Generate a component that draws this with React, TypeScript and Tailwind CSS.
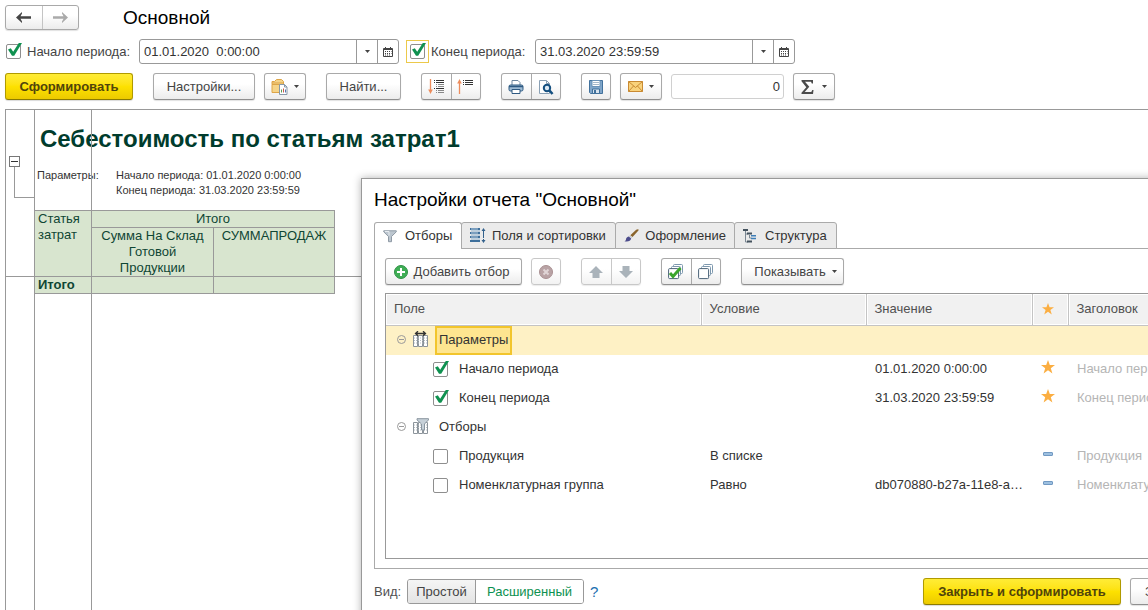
import React, { useState } from "react";

const btn =
  "flex h-[27px] items-center justify-center rounded-[3px] border border-[#a9a9a9] border-b-[#8f8f8f] bg-linear-to-b from-white from-40% to-[#ececec] text-[#444] shadow-[0_1px_1px_rgba(0,0,0,0.12)]";
const btnOff =
  "flex h-[27px] items-center justify-center rounded-[3px] border border-[#c8c8c8] bg-linear-to-b from-white from-40% to-[#f2f2f2] shadow-[0_1px_1px_rgba(0,0,0,0.08)]";
const yellow =
  "flex h-[27px] items-center justify-center rounded-[3px] border border-[#b09a00] border-b-[#8c7b00] bg-linear-to-b from-[#ffec35] via-[#fde100] to-[#ecca00] font-bold text-[#50440c] shadow-[0_1px_1px_rgba(0,0,0,0.15)]";
const pair =
  "flex h-[27px] w-[60px] divide-x divide-[#a9a9a9] rounded-[3px] border border-[#a9a9a9] border-b-[#8f8f8f] bg-linear-to-b from-white from-40% to-[#ececec] shadow-[0_1px_1px_rgba(0,0,0,0.12)]";
const pairOff =
  "flex h-[27px] w-[60px] divide-x divide-[#c8c8c8] rounded-[3px] border border-[#c8c8c8] bg-linear-to-b from-white from-40% to-[#f2f2f2] shadow-[0_1px_1px_rgba(0,0,0,0.08)]";
const half = "flex flex-1 items-center justify-center";

function Caret() {
  return (
    <svg width="5" height="3" viewBox="0 0 5 3" aria-hidden="true">
      <path d="M0 0h5L2.500 3z" fill="#444" />
    </svg>
  );
}

function Check({ id, label, initial = false }: { id: string; label?: string; initial?: boolean }) {
  const [on, setOn] = useState(initial);
  return (
    <span className="relative block size-[15px] shrink-0">
      <input
        id={id}
        type="checkbox"
        aria-label={label}
        checked={on}
        onChange={(e) => setOn(e.target.checked)}
        className="block size-[15px] appearance-none rounded-[2px] border border-[#8e8e8e] bg-white"
      />
      {on && (
        <svg className="pointer-events-none absolute -top-px left-0" width="18" height="15" viewBox="0 0 18 15" aria-hidden="true">
          <path d="M2 6.500 4.800 5.300 7.200 8.700 12.800 0 16 0 8.200 12.800 6 12.800z" fill="#0f9150" />
        </svg>
      )}
    </span>
  );
}

function CalendarIcon() {
  return (
    <svg width="10" height="10" viewBox="0 0 10 10" fill="none" stroke="#444" aria-hidden="true">
      <path d="M.5 1.500h9v8h-9z" />
      <path d="M1 2.500h8M2.500 0v2M7.500 0v2" />
      <path d="M2 4.500h1m1 0h1m1 0h1m1 0h.5M2 6.500h1m1 0h1m1 0h1m1 0h.5M2 8h1m1 0h1m1 0h1" />
    </svg>
  );
}

function DateField({ id, value }: { id: string; value: string }) {
  return (
    <div className="flex h-[25px] w-[260px] divide-x divide-[#999] overflow-hidden rounded-[3px] border border-[#999] bg-white">
      <input id={id} defaultValue={value} aria-label="Дата" className="min-w-0 flex-1 px-1 whitespace-pre text-[#333] outline-none" />
      <button aria-label="Выбрать из списка" className="flex w-[21px] items-center justify-center">
        <Caret />
      </button>
      <button aria-label="Календарь" className="flex w-5 items-center justify-center">
        <CalendarIcon />
      </button>
    </div>
  );
}

function NavArrow({ color, flip = false }: { color: string; flip?: boolean }) {
  return (
    <svg width="15" height="11" viewBox="0 0 15 11" className={flip ? "rotate-180" : ""} aria-hidden="true">
      <path d="M0 5.500 6 0v1.500L4.500 4.300H15v2.400H4.500L6 9.500V11z" fill={color} />
    </svg>
  );
}

function FolderReportIcon() {
  return (
    <svg width="17" height="17" viewBox="0 0 17 17" aria-hidden="true">
      <path d="M1 3.500h2.500l2-2h5l2 2v3H1z" fill="#f5d489" stroke="#dda548" />
      <path d="M1 6.500h11v8H1z" fill="#f5d489" stroke="#dda548" />
      <path d="M1 5h11" stroke="#dda548" />
      <path d="M8.500 6.500h5l2.500 2.500v7.500H8.500z" fill="#fff" stroke="#8798a8" />
      <path d="M13.500 6.500v2.500H16" fill="none" stroke="#8798a8" />
      <path d="M10.500 14.500v-3" stroke="#5a9a50" />
      <path d="M12.500 14.500v-4" stroke="#c85a4a" />
      <path d="M14.500 14.500v-3" stroke="#5878b0" />
    </svg>
  );
}

function ExpandIcon() {
  return (
    <svg width="17" height="16" viewBox="0 0 17 16" fill="none" aria-hidden="true">
      <path d="M2.500 0v12" stroke="#ec8c5c" strokeWidth="1.300" />
      <path d="M.2 10.500h4.600L2.500 15z" fill="#ec8c5c" />
      <path d="M6 1.500h1m1 0h8M6 3.500h1m1 0h8" stroke="#333" />
      <path d="M8 5.500h1m1 0h6M8 7.500h1m1 0h6" stroke="#888" />
      <path d="M6 9.500h1m1 0h8" stroke="#333" />
      <path d="M8 11.500h1m1 0h6M8 13.500h1m1 0h6" stroke="#888" />
    </svg>
  );
}

function CollapseIcon() {
  return (
    <svg width="17" height="16" viewBox="0 0 17 16" fill="none" aria-hidden="true">
      <path d="M2.500 3v12" stroke="#ec8c5c" strokeWidth="1.300" />
      <path d="M.2 4.500h4.600L2.500 0z" fill="#ec8c5c" />
      <path d="M6 1.500h1m1 0h8M6 3.500h1m1 0h8M6 5.500h1m1 0h8" stroke="#333" />
    </svg>
  );
}

function PrinterIcon() {
  return (
    <svg width="16" height="16" viewBox="0 0 16 16" aria-hidden="true">
      <path d="M4 6V1.500h6l2 2V6" fill="#fff" stroke="#6d869e" />
      <rect x="1" y="6" width="14" height="6" rx="1.500" fill="#9dbad3" stroke="#2f5a82" />
      <path d="M1 7.500h14" stroke="#2f5a82" strokeWidth="1.500" />
      <path d="M4 10.500h8v4H4z" fill="#fff" stroke="#2f5a82" />
    </svg>
  );
}

function PreviewIcon() {
  return (
    <svg width="16" height="16" viewBox="0 0 16 16" fill="none" aria-hidden="true">
      <path d="M1.500 1.500h7l3 3v10h-10z" fill="#fff" stroke="#8aa0b4" />
      <path d="M8.500 1.500v3h3" stroke="#8aa0b4" />
      <circle cx="9" cy="9" r="3.200" fill="#dceaf5" stroke="#155080" strokeWidth="2" />
      <path d="m11.500 11.500 3 3.500" stroke="#155080" strokeWidth="2.600" />
    </svg>
  );
}

function SaveIcon() {
  return (
    <svg width="16" height="16" viewBox="0 0 16 16" aria-hidden="true">
      <path d="M1.500 1.500h13v13h-12l-1-1z" fill="#7fa5c9" stroke="#41719c" />
      <path d="M4 1.500h8v6H4z" fill="#fff" stroke="#6b93b8" />
      <path d="M5 3.500h6M5 5.500h6" stroke="#a5b8ca" />
      <path d="M4.500 10h7v4.500h-7z" fill="#d7e3ee" stroke="#41719c" />
      <path d="M6 11h2v3H6z" fill="#41719c" />
    </svg>
  );
}

function MailIcon() {
  return (
    <svg width="15" height="11" viewBox="0 0 15 11" aria-hidden="true">
      <path d="M.5.5h14v10H.5z" fill="#f9d27b" stroke="#c98a32" />
      <path d="m.5.500 7 6 7-6M.5 10.500l5-5.500M14.500 10.500l-5-5.500" fill="none" stroke="#c98a32" />
    </svg>
  );
}

function SigmaIcon() {
  return (
    <svg width="13" height="14" viewBox="0 0 13 14" aria-hidden="true">
      <path d="M.5 0h11.500v3.500h-1.200L10 1.800H4l4.300 5L3.700 12H10.300l1-2h1.200L12 14H.5v-1.300L5.300 7.200.5 1.300z" fill="#4a4a4a" />
    </svg>
  );
}

function FunnelIcon() {
  return (
    <svg width="14" height="13" viewBox="0 0 14 13" aria-hidden="true">
      <path d="M.7.8h12.600v1L8.500 6.500v5.200H5.500V6.500L.7 1.800z" fill="#bcc6cf" stroke="#8f9aa5" />
      <path d="M2 1.500h4v4" fill="none" stroke="#e8edf1" />
    </svg>
  );
}

function FieldsIcon() {
  return (
    <svg width="16" height="15" viewBox="0 0 16 15" fill="none" aria-hidden="true">
      <path d="M0 1h10M0 5h10M0 9h10M0 13h10" stroke="#3e6f9b" strokeWidth="2" />
      <path d="M1 3h9M1 7h9M1 11h9" stroke="#8fb0cc" />
      <path d="M1 5h7M1 9h7M1 1h7" stroke="#b8cfe2" />
      <path d="M13.500 2v11" stroke="#33618c" strokeDasharray="8 1" />
      <path d="m11.500 3 2-3 2 3zM11.500 12l2 3 2-3z" fill="#33618c" />
    </svg>
  );
}

function BrushIcon() {
  return (
    <svg width="17" height="15" viewBox="0 0 17 15" aria-hidden="true">
      <path d="M15.500.5c1 0 1 1 .3 1.800L9.500 9.300 7 7.200 13.500 1z" fill="#8a642c" />
      <path d="m6.500 7.300 2.800 2.300-1 1L5.700 8.300z" fill="#c3c7cc" />
      <path d="M5.300 8.500 8 10.800c-.5 3-4 4-7.500 3 2-.8 1.500-1.800 2-3.300.4-1 1.500-1.800 2.800-2z" fill="#4c4c8c" />
    </svg>
  );
}

function StructureIcon() {
  return (
    <svg width="14" height="14" viewBox="0 0 14 14" fill="none" aria-hidden="true">
      <path d="M0 1h5" stroke="#44525e" strokeWidth="2" />
      <path d="M2.500 2v11H5M2.500 5H5M6.500 6v3h2" stroke="#7a8792" />
      <path d="M4 4.500h5" stroke="#44525e" strokeWidth="2" />
      <path d="M8 6.800h5M8 9.500h5" stroke="#3f7fb8" strokeWidth="1.600" />
      <path d="M4 12.500h5" stroke="#44525e" strokeWidth="2" />
    </svg>
  );
}

function PlusIcon() {
  return (
    <svg width="14" height="14" viewBox="0 0 14 14" aria-hidden="true">
      <circle cx="7" cy="7" r="6.500" fill="#3fae55" stroke="#2f9246" />
      <path d="M7 3v8M3 7h8" stroke="#fff" strokeWidth="2" />
    </svg>
  );
}

function DeleteIcon() {
  return (
    <svg width="14" height="14" viewBox="0 0 14 14" aria-hidden="true">
      <circle cx="7" cy="7" r="6.500" fill="#b9a3a5" stroke="#a99092" />
      <path d="m4.500 4.500 5 5m0-5-5 5" stroke="#e0d5d6" strokeWidth="2" />
    </svg>
  );
}

function MoveIcon({ down = false }: { down?: boolean }) {
  return (
    <svg width="14" height="12" viewBox="0 0 14 12" className={down ? "rotate-180" : ""} aria-hidden="true">
      <path d="m7 0 7 7h-3.500v5h-7V7H0z" fill="#aab3ba" />
    </svg>
  );
}

function StackIcon({ checked = false }: { checked?: boolean }) {
  return (
    <svg width="16" height="16" viewBox="0 0 16 16" aria-hidden="true">
      <g fill="#fff" stroke="#7d98ae">
        <rect x="5.500" y=".5" width="9" height="9" rx="1" />
        <rect x="3.500" y="2.500" width="9" height="9" rx="1" />
      </g>
      <rect x=".6" y="4.600" width="10" height="10" rx="1" fill="#fff" stroke="#4a6378" />
      {checked && <path d="m2 9 3 3.500 7.500-8.500" fill="none" stroke="#3ba52c" strokeWidth="3" />}
    </svg>
  );
}

function StarIcon({ size }: { size: number }) {
  return (
    <svg width={size} height={size} viewBox="0 0 14 14" className="mx-auto" aria-hidden="true">
      <path d="m7 0 1.800 5H14l-4.200 3.200L11.400 13.500 7 10.300 2.600 13.500 4.200 8.200 0 5h5.200z" fill="#fbae42" />
    </svg>
  );
}

function DashIcon() {
  return (
    <svg width="10" height="4" viewBox="0 0 10 4" className="mx-auto" aria-hidden="true">
      <rect x=".5" y=".5" width="9" height="3" rx=".5" fill="#9dc0e0" stroke="#7199c2" />
    </svg>
  );
}

function GroupIcon({ filter = false }: { filter?: boolean }) {
  return (
    <svg width="16" height="16" viewBox="0 0 16 16" fill="none" aria-hidden="true">
      <path d="M.5 4.500h4v11h-4zM5.500 4.500h4v11h-4zM10.500 4.500h4v11h-4z" fill="#fff" stroke="#8c949b" />
      <path d="M1 7h13M1 9.500h13M1 12h13" stroke="#b5bcc2" strokeDasharray="1 1" />
      {filter ? (
        <path d="M4 .7h11.500v1.200L11.500 6v6h-3V6L4 1.900z" fill="#c6d0d8" stroke="#89959f" />
      ) : (
        <path d="M3 2.500h9M5 .2 2.500 2.500 5 4.800M10 .2l2.500 2.300L10 4.800" stroke="#333" strokeWidth="1.300" />
      )}
    </svg>
  );
}

function CollapseMark() {
  return (
    <svg width="9" height="9" viewBox="0 0 9 9" fill="none" stroke="#999" aria-hidden="true">
      <circle cx="4.500" cy="4.500" r="4" />
      <path d="M2 4.500h5" />
    </svg>
  );
}

type Item = { id: string; name: string; on: boolean; cond: string; value: string; star: boolean };
const params: Item[] = [
  { id: "p1", name: "Начало периода", on: true, cond: "", value: "01.01.2020 0:00:00", star: true },
  { id: "p2", name: "Конец периода", on: true, cond: "", value: "31.03.2020 23:59:59", star: true },
];
const filters: Item[] = [
  { id: "f1", name: "Продукция", on: false, cond: "В списке", value: "", star: false },
  { id: "f2", name: "Номенклатурная группа", on: false, cond: "Равно", value: "db070880-b27a-11e8-a…", star: false },
];

function ItemRow({ item }: { item: Item }) {
  return (
    <tr className="h-[29px]">
      <td className="pl-[47px]">
        <div className="flex items-center gap-[11px]">
          <Check id={item.id} initial={item.on} />
          <label htmlFor={item.id}>{item.name}</label>
        </div>
      </td>
      <td className="pl-[9px]">{item.cond}</td>
      <td className="pl-[9px] whitespace-nowrap">{item.value}</td>
      <td className="pr-1 pb-1">{item.star ? <StarIcon size={14} /> : <DashIcon />}</td>
      <td className="pl-[9px] whitespace-nowrap text-[#b5b5b5]">{item.name}</td>
    </tr>
  );
}

function GroupRow({ name, selected = false }: { name: string; selected?: boolean }) {
  return (
    <tr className={selected ? "h-[29px] bg-[#fef1c5]" : "h-[29px]"}>
      <td colSpan={5} className="pl-[11px]">
        <div className="flex h-[29px] items-center">
          <button aria-label="Свернуть" className="pb-0.5">
            <CollapseMark />
          </button>
          <span className="mr-1.5 ml-[7px] pb-0.5">
            <GroupIcon filter={!selected} />
          </span>
          <span
            className={
              selected
                ? "flex h-[29px] items-center border-2 border-[#f2c52c] bg-[#fee590] px-0.5"
                : "flex h-[29px] items-center px-1"
            }
          >
            {name}
          </span>
        </div>
      </td>
    </tr>
  );
}

function Tab({ icon, label, size, active = false }: { icon: React.ReactNode; label: string; size: string; active?: boolean }) {
  return (
    <button
      role="tab"
      aria-selected={active}
      className={`${size} -mr-px flex h-[27px] items-center rounded-t-[3px] border border-[#aaa] px-2 whitespace-nowrap text-[#333] ${
        active ? "border-b-0 bg-white" : "bg-[#ebebeb]"
      }`}
    >
      {icon}
      {label}
    </button>
  );
}

function SettingsDialog() {
  const th = "border-r border-[#c4c4c4] pl-2 text-left font-normal shadow-[inset_1px_1px_0_#fff,inset_-1px_-1px_0_#fff]";
  return (
    <section
      role="dialog"
      aria-label="Настройки отчета"
      className="absolute top-[178px] right-[-75px] bottom-[-12px] left-[361px] flex flex-col border border-[#999] bg-white px-3 pb-4 shadow-[0_0_8px_rgba(0,0,0,0.3)]"
    >
      <h2 className="mt-2 mb-[9px] text-[19px] leading-[26px] text-black">Настройки отчета "Основной"</h2>
      <div role="tablist" className="z-10 -mb-px flex">
        <Tab active size="w-[88px] gap-2" icon={<FunnelIcon />} label="Отборы" />
        <Tab size="w-[155px] gap-1.5" icon={<FieldsIcon />} label="Поля и сортировки" />
        <Tab size="w-[120px] gap-1.5" icon={<BrushIcon />} label="Оформление" />
        <Tab size="w-[103px] gap-2" icon={<StructureIcon />} label="Структура" />
      </div>
      <div className="flex min-h-0 flex-1 flex-col border border-[#aaa] px-2.5 pt-[9px] pb-[9px]">
        <div className="flex gap-5">
          <div className="flex gap-[9px]">
            <button className={`${btn} w-[137px] gap-1.5 pr-1`}>
              <PlusIcon />
              Добавить отбор
            </button>
            <button aria-label="Удалить" className={`${btnOff} w-[30px]`}>
              <DeleteIcon />
            </button>
          </div>
          <div className={pairOff}>
            <button aria-label="Вверх" className={half}>
              <MoveIcon />
            </button>
            <button aria-label="Вниз" className={half}>
              <MoveIcon down />
            </button>
          </div>
          <div className={pair}>
            <button aria-label="Установить флажки" className={half}>
              <StackIcon checked />
            </button>
            <button aria-label="Снять флажки" className={half}>
              <StackIcon />
            </button>
          </div>
          <button className={`${btn} w-[103px] gap-1.5 pl-1.5`}>
            Показывать
            <Caret />
          </button>
        </div>
        <div className="mt-2 min-h-0 flex-1 overflow-hidden border border-[#999]">
          <table className="w-full table-fixed border-collapse text-[#333]">
            <colgroup>
              <col className="w-[315px]" />
              <col className="w-[165px]" />
              <col className="w-[166px]" />
              <col className="w-[36px]" />
              <col />
            </colgroup>
            <thead>
              <tr className="h-[31px] border-b border-[#c4c4c4] bg-[#f1f1f1] text-[#505050]">
                <th className={th}>Поле</th>
                <th className={th}>Условие</th>
                <th className={th}>Значение</th>
                <th
                  className="border-r border-[#c4c4c4] pr-1 shadow-[inset_1px_1px_0_#fff,inset_-1px_-1px_0_#fff]"
                  aria-label="Избранное"
                >
                  <StarIcon size={12} />
                </th>
                <th className={th}>Заголовок</th>
              </tr>
            </thead>
            <tbody>
              <GroupRow name="Параметры" selected />
              {params.map((i) => (
                <ItemRow key={i.id} item={i} />
              ))}
              <GroupRow name="Отборы" />
              {filters.map((i) => (
                <ItemRow key={i.id} item={i} />
              ))}
            </tbody>
          </table>
        </div>
      </div>
      <div className="mt-[9px] flex h-[27px] items-center">
        <span className="w-[33px] text-[#505050]">Вид:</span>
        <div className="flex h-[25px] overflow-hidden rounded-[3px] border border-[#999]">
          <button className="w-[68px] border-r border-[#999] bg-linear-to-b from-[#f5f5f5] to-[#e4e4e4] text-[#444]">Простой</button>
          <button className="w-[107px] bg-white text-[#0c9150]">Расширенный</button>
        </div>
        <a href="#help" className="ml-1.5 text-[15px] text-[#1a6fb0]">
          ?
        </a>
        <div className="ml-auto flex gap-[9px]">
          <button className={`${yellow} w-[198px]`}>Закрыть и сформировать</button>
          <button className={`${btn} w-[80px]`}>Закрыть</button>
        </div>
      </div>
    </section>
  );
}

function Report() {
  const cell = "border border-[#999] p-0 align-top font-normal";
  return (
    <main className="relative ml-[5px] flex flex-1 border-t border-l border-[#999]">
      <div className="w-7 shrink-0 pt-[46px] pl-[3px]">
        <button aria-label="Свернуть группу" className="flex size-[11px] items-center justify-center border border-[#777] bg-white">
          <span className="h-px w-[7px] bg-[#333]" />
        </button>
        <div className="ml-[5px] h-[31px] border-b border-l border-[#999]" />
      </div>
      <div className="flex-1 border-l border-[#999]">
        <h1 className="pt-[13px] pl-[5px] text-[24px] leading-[32px] font-bold whitespace-nowrap text-[#003c2d]">
          Себестоимость по статьям затрат1
        </h1>
        <div className="mt-[13px] flex pl-0.5 text-[11px] leading-[15px] text-[#333]">
          <span className="w-[79px]">Параметры:</span>
          <div>
            <p>Начало периода: 01.01.2020 0:00:00</p>
            <p>Конец периода: 31.03.2020 23:59:59</p>
          </div>
        </div>
        <table className="mt-3 -ml-px w-[301px] table-fixed border-collapse bg-[#d8e5cf] text-[13px] leading-4 text-[#0f4634]">
          <colgroup>
            <col className="w-[57px]" />
            <col className="w-[122px]" />
            <col className="w-[121px]" />
          </colgroup>
          <thead>
            <tr>
              <th rowSpan={2} className={`${cell} pl-[3px] text-left`}>
                Статья затрат
              </th>
              <th colSpan={2} className={cell}>
                Итого
              </th>
            </tr>
            <tr>
              <th className={`${cell} px-1`}>Сумма На Склад Готовой Продукции</th>
              <th className={cell}>СУММАПРОДАЖ</th>
            </tr>
          </thead>
          <tbody>
            <tr>
              <th className={`${cell} pl-[3px] text-left`}>
                <b>Итого</b>
              </th>
              <td className={cell} />
              <td className={cell} />
            </tr>
          </tbody>
        </table>
      </div>
      <div className="pointer-events-none absolute inset-y-0 left-[85px] w-px bg-[#999]" />
      <div className="pointer-events-none absolute inset-x-0 top-[166px] h-px bg-[#999]" />
    </main>
  );
}

export default function App() {
  return (
    <div className="relative flex h-screen flex-col overflow-hidden bg-white font-['Liberation_Sans',Arial,sans-serif] text-[13px] leading-4 text-[#444]">
      <header className="flex flex-col gap-[9px] pt-[5px] pb-[9px] pl-[5px]">
        <div className="flex h-[25px] items-center gap-11">
          <div className="flex h-[25px] w-[74px] divide-x divide-[#c4c4c4] rounded-[3px] border border-[#a9a9a9] bg-linear-to-b from-white from-40% to-[#ececec] shadow-[0_1px_1px_rgba(0,0,0,0.12)]">
            <button aria-label="Назад" className={half}>
              <NavArrow color="#444" />
            </button>
            <button aria-label="Вперед" className={half}>
              <NavArrow color="#aaa" flip />
            </button>
          </div>
          <h1 className="text-[19px] text-black">Основной</h1>
        </div>
        <div className="flex h-[25px] items-center">
          <div className="flex w-[134px] items-center gap-1.5 pl-px">
            <Check id="from-on" initial />
            <label htmlFor="from-on">Начало периода:</label>
          </div>
          <DateField id="from" value="01.01.2020  0:00:00" />
          <div className="ml-[7px] flex w-[129px] items-center gap-0.5">
            <span className="flex size-[23px] items-center justify-center border border-[#ecc94b] bg-white">
              <Check id="to-on" initial />
            </span>
            <label htmlFor="to-on" className="whitespace-nowrap">
              Конец периода:
            </label>
          </div>
          <DateField id="to" value="31.03.2020 23:59:59" />
        </div>
        <div className="flex gap-5">
          <button className={`${yellow} w-[128px]`}>Сформировать</button>
          <div className="flex gap-[9px]">
            <button className={`${btn} w-[102px]`}>Настройки...</button>
            <button aria-label="Варианты отчета" className={`${btn} w-[42px] gap-1.5`}>
              <FolderReportIcon />
              <Caret />
            </button>
          </div>
          <button className={`${btn} w-[75px]`}>Найти...</button>
          <div className={pair}>
            <button aria-label="Развернуть" className={half}>
              <ExpandIcon />
            </button>
            <button aria-label="Свернуть" className={half}>
              <CollapseIcon />
            </button>
          </div>
          <div className={pair}>
            <button aria-label="Печать" className={half}>
              <PrinterIcon />
            </button>
            <button aria-label="Просмотр" className={half}>
              <PreviewIcon />
            </button>
          </div>
          <div className="flex gap-[9px]">
            <button aria-label="Сохранить" className={`${btn} w-[30px]`}>
              <SaveIcon />
            </button>
            <button aria-label="Отправить" className={`${btn} w-[42px] gap-1.5`}>
              <MailIcon />
              <Caret />
            </button>
            <input
              aria-label="Сумма"
              defaultValue="0"
              className="h-[25px] w-[113px] self-center rounded-[3px] border border-[#d0d0d0] px-[3px] text-right text-[#333]"
            />
            <button aria-label="Итоги" className={`${btn} w-[42px] gap-2`}>
              <SigmaIcon />
              <Caret />
            </button>
          </div>
        </div>
      </header>
      <Report />
      <SettingsDialog />
    </div>
  );
}
